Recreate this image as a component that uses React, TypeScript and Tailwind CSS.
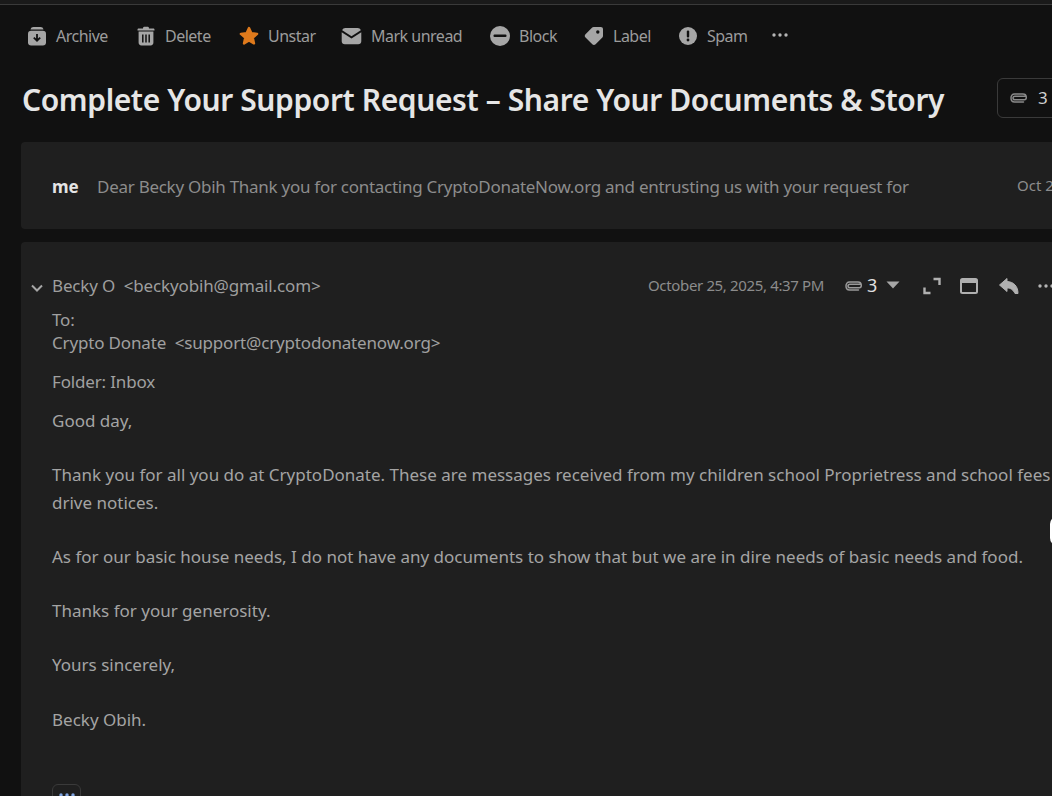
import type { ReactNode } from "react";

const fill = "#a6a6a6";

function ArchiveIcon() {
    return (
        <svg width="20" height="20" viewBox="0 0 20 20">
            <path d="M3.5 3.6C3.9 1.8 5 1 6.500 1h7c1.500 0 2.600.8 3 2.600z" fill={fill} />
            <rect x="1" y="4.800" width="18" height="14.700" rx="3.200" fill={fill} />
            <path d="M10 8v6.500M6.800 11.600l3.200 3.100 3.200-3.100" fill="none" stroke="#111" strokeWidth="1.800" />
        </svg>
    );
}

function TrashIcon() {
    return (
        <svg width="18" height="20" viewBox="0 0 18 20">
            <path d="M6 2.400C6 1.200 6.800.8 7.800.8h2.400c1 0 1.800.4 1.800 1.600h4.200c.8 0 1.300.5 1.300 1.200v1H.5v-1c0-.7.500-1.200 1.300-1.200z" fill={fill} />
            <path d="M1.600 5.600h14.800v11c0 1.700-1 2.900-2.800 2.900H4.400c-1.800 0-2.800-1.200-2.800-2.900z" fill={fill} />
            <path d="M5.800 8.500v8M9 8.500v8M12.200 8.500v8" stroke="#111" strokeWidth="1.500" />
        </svg>
    );
}

function StarIcon() {
    return (
        <svg width="20" height="20" viewBox="0 0 20 20">
            <path d="M10 2l2.400 5.300 5.700.6-4.300 3.800 1.200 5.700-5-2.900-5 2.900 1.200-5.700-4.300-3.800 5.700-.6z" fill="#df7a1c" stroke="#df7a1c" strokeWidth="2.400" strokeLinejoin="round" />
        </svg>
    );
}

function MailIcon() {
    return (
        <svg width="21" height="18" viewBox="0 0 21 18">
            <path d="M1.200 3.200C1.700 1.700 2.900 1 4.300 1h12.400c1.400 0 2.600.7 3.100 2.200L10.500 9.300z" fill={fill} />
            <path d="M.7 5.200l9.800 6.400 9.800-6.400v9c0 1.800-1.300 3-3.100 3H3.800c-1.800 0-3.100-1.200-3.100-3z" fill={fill} />
        </svg>
    );
}

function BlockIcon() {
    return (
        <svg width="20" height="20" viewBox="0 0 20 20">
            <circle cx="10" cy="10" r="10" fill={fill} />
            <rect x="3.500" y="8.500" width="13" height="2.600" rx="1" fill="#111" />
        </svg>
    );
}

function LabelIcon() {
    return (
        <svg width="20" height="20" viewBox="0 0 20 20">
            <path d="M9.800 1h7c1.300 0 2.200.9 2.200 2.200v6.500c0 .9-.3 1.500-.9 2.100l-6.500 6.500c-1 1-2.300 1-3.300 0L1.500 11.600c-1-1-1-2.300 0-3.300l6.200-6.400C8.300 1.300 8.900 1 9.800 1z" fill={fill} />
            <circle cx="13.800" cy="6" r="1.700" fill="#111" />
        </svg>
    );
}

function SpamIcon() {
    return (
        <svg width="18" height="18" viewBox="0 0 18 18">
            <circle cx="9" cy="9" r="9" fill={fill} />
            <rect x="7.800" y="3.500" width="2.400" height="7" rx="1.100" fill="#111" />
            <circle cx="9" cy="13" r="1.400" fill="#111" />
        </svg>
    );
}

function Dots({ color = "#b5b5b5" }: { color?: string }) {
    return (
        <svg width="16" height="4" viewBox="0 0 16 4">
            <circle cx="2" cy="2" r="1.700" fill={color} />
            <circle cx="8" cy="2" r="1.700" fill={color} />
            <circle cx="14" cy="2" r="1.700" fill={color} />
        </svg>
    );
}

function ClipIcon({ color = "#9a9a9a" }: { color?: string }) {
    return (
        <svg width="17" height="10" viewBox="0 0 17 10" fill="none">
            <path d="M15.500 3.200H5c-1.200 0-2 .7-2 1.800s.8 1.800 2 1.800h9.500M14.500 6.800c1 0 1.800-.8 1.800-2.200 0-2-1.200-3.600-3.300-3.600H4.500C2.300 1 1 2.700 1 5s1.300 4 3.500 4h9" stroke={color} strokeWidth="1.500" strokeLinecap="round" />
        </svg>
    );
}

function ToolbarItem({ icon, label, width }: { icon: ReactNode; label: string; width: string }) {
    return (
        <div className="flex h-6 shrink-0 items-center gap-[9px]">
            {icon}
            <span className={`text-[16px] whitespace-nowrap text-[#9c9c9c] tracking-[-0.5px] ${width}`}>{label}</span>
        </div>
    );
}

export default function App() {
    return (
        <div className="h-[796px] w-[1052px] overflow-hidden bg-[#111111] font-['Noto_Sans','Open_Sans',sans-serif] relative">
            <div className="h-1 bg-[#1a1a1a]" />
            <div className="h-px bg-[#3a3a3a]" />

            {/* toolbar */}
            <div className="flex h-[62px] items-center gap-7 pl-[27px]">
                <ToolbarItem icon={<ArchiveIcon />} label="Archive" width="w-[53px]" />
                <ToolbarItem icon={<TrashIcon />} label="Delete" width="w-[47px] pl-px" />
                <ToolbarItem icon={<StarIcon />} label="Unstar" width="w-[45px]" />
                <ToolbarItem icon={<MailIcon />} label="Mark unread" width="w-[91px]" />
                <ToolbarItem icon={<BlockIcon />} label="Block" width="w-[37px]" />
                <ToolbarItem icon={<LabelIcon />} label="Label" width="w-[38px]" />
                <ToolbarItem icon={<SpamIcon />} label="Spam" width="w-[42px] pl-px" />
                <div className="-ml-1 -mt-0.5">
                    <Dots />
                </div>
            </div>

            {/* subject */}
            <div className="flex h-[75px] w-[1100px] items-start pt-[11px] pl-[22px]">
                <h1 className="mt-0.5 w-[975px] text-[30px] leading-10 font-semibold whitespace-nowrap text-[#e6e6e6] tracking-[-0.4px]">
                    Complete Your Support Request – Share Your Documents &amp; Story
                </h1>
                <div className="flex h-10 w-[90px] items-center gap-[11px] rounded-md border border-[#3a3a3a] pl-3 text-[17px] text-[#cfcfcf]">
                    <ClipIcon color="#8a8a8a" />
                    <span>3</span>
                </div>
            </div>

            {/* collapsed message */}
            <div className="ml-[21px] flex h-[87px] w-[1100px] items-center rounded bg-[#1f1f1f] pl-[31px]">
                <span className="mt-0.5 w-[45px] text-[17px] font-bold text-[#e4e4e4]">me</span>
                <span className="mt-[3px] w-[920px] text-[17px] whitespace-nowrap text-[#8c8c8c] tracking-[-0.27px]">
                    Dear Becky Obih Thank you for contacting CryptoDonateNow.org and entrusting us with your request for
                </span>
                <span className="text-[15px] whitespace-nowrap text-[#8c8c8c]">Oct 25</span>
            </div>

            {/* open message */}
            <div className="mt-[13px] ml-[21px] w-[1100px] rounded bg-[#1f1f1f] pb-10">
                <div className="box-content flex h-[31px] items-center pt-7">
                    <svg width="12" height="8" viewBox="0 0 12 8" fill="none" className="mt-1 ml-[10px] mr-[9px]">
                        <path d="M1 1.500l5 5 5-5" stroke="#a6a6a6" strokeWidth="2" />
                    </svg>
                    <span className="w-[596px] text-[17px] whitespace-nowrap text-[#9e9e9e] tracking-[-0.15px]">
                        Becky O&nbsp; &lt;beckyobih@gmail.com&gt;
                    </span>
                    <span className="w-[197px] text-[15px] whitespace-nowrap text-[#8c8c8c] tracking-[-0.35px]">October 25, 2025, 4:37 PM</span>
                    <ClipIcon />
                    <span className="ml-[5px] text-[18px] text-[#e0e0e0]">3</span>
                    <svg width="14" height="8" viewBox="0 0 14 8" className="ml-[9px] -mt-0.5">
                        <path d="M.5 .5h13L7 7.500z" fill="#a6a6a6" />
                    </svg>
                    <svg width="18" height="18" viewBox="0 0 18 18" fill="none" className="ml-[23px]">
                        <path d="M10.500 2H16.500V8M1.500 10.500V16H7.500" stroke="#b0b0b0" strokeWidth="2.400" />
                    </svg>
                    <svg width="18" height="16" viewBox="0 0 18 16" fill="none" className="ml-[19px]">
                        <rect x="1" y="1" width="16" height="14" rx="1.500" stroke="#b0b0b0" strokeWidth="2" />
                        <rect x="1" y="1" width="16" height="4" fill="#b0b0b0" />
                    </svg>
                    <svg width="20" height="16" viewBox="0 0 20 16" className="ml-[21px]">
                        <path d="M8 .5L.5 7 8 13.500V10c3.500 0 6 1.500 8 5.500h3C19 8.500 15 3.800 8 3.500z" fill="#b0b0b0" stroke="#b0b0b0" strokeLinejoin="round" />
                    </svg>
                    <div className="ml-[19px]">
                        <Dots />
                    </div>
                </div>

                <div className="pl-[31px] text-[17px] text-[#a0a0a0] tracking-[-0.16px]">
                    <div className="mt-[7px] leading-[23px]">To:</div>
                    <div className="leading-[23px]">Crypto Donate&nbsp; &lt;support@cryptodonatenow.org&gt;</div>
                    <div className="mt-[16px] leading-[23px]">Folder: Inbox</div>

                    <div className="mt-[14px] w-[1010px] leading-[28px] tracking-normal text-[#a4a4a4]">
                        <p>Good day,</p>
                        <p className="mt-[26px]">
                            Thank you for all you do at CryptoDonate. These are messages received from my children school Proprietress and school fees
                            drive notices.
                        </p>
                        <p className="mt-[26px]">As for our basic house needs, I do not have any documents to show that but we are in dire needs of basic needs and food.</p>
                        <p className="mt-[26px]">Thanks for your generosity.</p>
                        <p className="mt-[26px]">Yours sincerely,</p>
                        <p className="mt-[27px]">Becky Obih.</p>
                    </div>

                    <div className="mt-[50px] flex h-6 w-[29px] justify-center rounded-md border border-[#3a3a3a] pt-2">
                        <Dots color="#7fa3e0" />
                    </div>
                </div>
            </div>

            {/* edge of a floating button */}
            <div className="absolute top-[516px] left-[1050px] h-[30px] w-6 rounded-l-lg bg-white" />
        </div>
    );
}
